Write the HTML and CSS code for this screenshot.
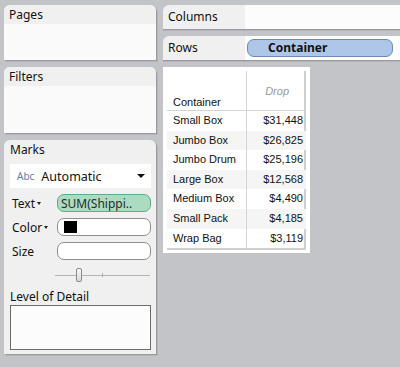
FILE: index.html
```
<!DOCTYPE html>
<html lang="en">
<head>
  <meta charset="UTF-8">
  <title>Container by Shipping</title>
  <link rel="stylesheet" href="styles.css">
</head>
<body>

  <div class="app">
    <!-- left cards -->
    <div class="side">
      <div class="card pages">
        <div class="card-head">Pages</div>
        <div class="card-body"></div>
      </div>

      <div class="card filters">
        <div class="card-head">Filters</div>
        <div class="card-body"></div>
      </div>

      <div class="card marks">
        <div class="marks-title">Marks</div>
        <div class="mark-type">
          <span class="abc">Abc</span>
          <span class="mark-name">Automatic</span>
          <span class="caret"></span>
        </div>

        <div class="mark-row">
          <span class="mark-label">Text<i class="mini-caret"></i></span>
          <span class="mark-field pill-green">SUM(Shippi..</span>
        </div>
        <div class="mark-row">
          <span class="mark-label">Color<i class="mini-caret"></i></span>
          <span class="mark-field"><span class="swatch"></span></span>
        </div>
        <div class="mark-row">
          <span class="mark-label">Size</span>
          <span class="mark-field"></span>
        </div>

        <div class="slider">
          <div class="track"></div>
          <div class="tick"></div>
          <div class="thumb"></div>
        </div>

        <div class="lod-label">Level of Detail</div>
        <div class="lod-box"></div>
      </div>
    </div>

    <!-- shelves + view -->
    <div class="main">
      <div class="shelf">
        <div class="shelf-label">Columns</div>
        <div class="shelf-drop"></div>
      </div>
      <div class="shelf">
        <div class="shelf-label">Rows</div>
        <div class="shelf-drop">
          <span class="pill-blue">Container</span>
        </div>
      </div>

      <div class="view">
        <div class="grid">
          <div class="head-left">Container</div>
          <div class="head-right">Drop</div>

          <div class="cell">Small Box</div><div class="cell num">$31,448</div>
          <div class="cell band">Jumbo Box</div><div class="cell num band">$26,825</div>
          <div class="cell">Jumbo Drum</div><div class="cell num">$25,196</div>
          <div class="cell band">Large Box</div><div class="cell num band">$12,568</div>
          <div class="cell">Medium Box</div><div class="cell num">$4,490</div>
          <div class="cell band">Small Pack</div><div class="cell num band">$4,185</div>
          <div class="cell">Wrap Bag</div><div class="cell num">$3,119</div>
        </div>
      </div>
    </div>
  </div>

</body>
</html>
```

FILE: styles.css
```
body {
  margin: 0;
  background: #c3c4c8;
  font-family: "Noto Sans", "Open Sans", sans-serif;
  font-size: 12px;
  color: #111;
}

.app {
  display: flex;
  width: 400px;
  height: 367px;
  overflow: hidden;
  padding: 5px 0 0 4px;
  box-sizing: border-box;
  gap: 7px;
}

.side {
  width: 152px;
  display: flex;
  flex-direction: column;
  gap: 7px;
}

.card {
  background: #fafafa;
  border-radius: 6px 6px 0 0;
  box-shadow: 1px 1px 0 #9a9a9e, 2px 2px 0 #b4b5b9;
  overflow: hidden;
}

.card-head {
  background: #f0f0f0;
  height: 19px;
  line-height: 19px;
  padding-left: 5px;
}

.pages .card-body { height: 36px; }
.filters .card-body { height: 47px; }

.marks {
  background: #f0f0f0;
  height: 214px;
  padding: 0 5px 0 6px;
  box-sizing: border-box;
}

.marks-title {
  height: 19px;
  line-height: 20px;
  margin-bottom: 5px;
}

.mark-type {
  background: #fff;
  height: 24px;
  display: flex;
  align-items: center;
  padding: 0 6px 0 7px;
}

.abc {
  color: #5a7fa8;
  font-size: 10px;
  margin-right: 7px;
}

.mark-name {
  flex: 1;
  font-size: 12.5px;
}

.caret {
  width: 0;
  height: 0;
  border-left: 4px solid transparent;
  border-right: 4px solid transparent;
  border-top: 4px solid #111;
}

.mark-row {
  display: flex;
  align-items: center;
  height: 18px;
  margin-top: 6px;
}

.mark-row:first-of-type { margin-top: 7px; }

.mark-label {
  width: 45px;
  padding-left: 2px;
  display: flex;
  align-items: center;
}

.mini-caret {
  display: inline-block;
  margin-left: 2px;
  border-left: 2.5px solid transparent;
  border-right: 2.5px solid transparent;
  border-top: 3px solid #222;
}

.mark-field {
  flex: 1;
  height: 18px;
  box-sizing: border-box;
  background: #fff;
  border: 1px solid #8e8e8e;
  border-radius: 7px;
  display: flex;
  align-items: center;
  padding-left: 6px;
}

.pill-green {
  background: #a9dcc1;
  border-color: #5fad86;
  color: #2a2a2a;
  padding-left: 3px;
}

.swatch {
  width: 13px;
  height: 12px;
  background: #000;
}

.slider {
  position: relative;
  height: 24px;
  margin: 2px 0 0 45px;
}

.track {
  position: absolute;
  left: 0;
  right: 1px;
  top: 13px;
  height: 1px;
  background: #b4b4b4;
}

.tick {
  position: absolute;
  left: 47px;
  top: 11px;
  width: 1px;
  height: 4px;
  background: #b0b0b0;
}

.thumb {
  position: absolute;
  left: 21px;
  top: 6px;
  width: 6px;
  height: 14px;
  box-sizing: border-box;
  border: 1px solid #8a8a8a;
  border-radius: 2px;
  background: linear-gradient(#f8f8f8, #d8d8d8);
}

.lod-label {
  margin-top: 3px;
  height: 16px;
  line-height: 16px;
}

.lod-box {
  height: 45px;
  background: #fcfcfc;
  border: 1px solid #6c6c6c;
  box-sizing: border-box;
}

/* right side */
.main {
  flex: 1;
  display: flex;
  flex-direction: column;
  gap: 7px;
  min-width: 0;
}

.shelf {
  display: flex;
  height: 24px;
  border-radius: 6px 0 0 0;
  overflow: hidden;
  box-shadow: 0 1px 0 #9a9a9e, 0 2px 0 #b4b5b9;
}

.shelf-label {
  width: 82px;
  background: #f0f0f0;
  line-height: 24px;
  padding-left: 5px;
  box-sizing: border-box;
}

.shelf-drop {
  flex: 1;
  background: #fcfcfc;
  display: flex;
  align-items: center;
  padding-left: 2px;
}

.pill-blue {
  width: 146px;
  height: 18px;
  box-sizing: border-box;
  background: #aec7e8;
  border: 1px solid #6b87b4;
  border-radius: 7px;
  font-weight: bold;
  padding-left: 20px;
  line-height: 16px;
}

.view {
  width: 147px;
  height: 186px;
  background: #fff;
  padding: 4px 4px 0 4px;
  box-sizing: border-box;
}

.grid {
  display: grid;
  grid-template-columns: 80px 59px;
  grid-template-rows: 40px repeat(7, 19.6px);
  font-family: "Liberation Sans", Arial, sans-serif;
  font-size: 11px;
  color: #111;
  border-right: 2px solid #cfcfcf;
  border-bottom: 2px solid #cfcfcf;
}

.head-left {
  border-bottom: 1px solid #d4d4d4;
  border-right: 1px solid #d4d4d4;
  display: flex;
  align-items: flex-end;
  padding: 0 0 2px 6px;
}

.head-right {
  border-bottom: 1px solid #d4d4d4;
  color: #9a9a9a;
  font-style: italic;
  text-align: right;
  padding: 14px 17px 0 0;
}

.cell {
  line-height: 19.6px;
  padding-left: 6px;
  white-space: nowrap;
}

.cell:not(.num) {
  border-right: 1px solid #d4d4d4;
}

.cell.num {
  text-align: right;
  padding: 0 3px 0 0;
}

.band {
  background: #f5f5f5;
}
```
